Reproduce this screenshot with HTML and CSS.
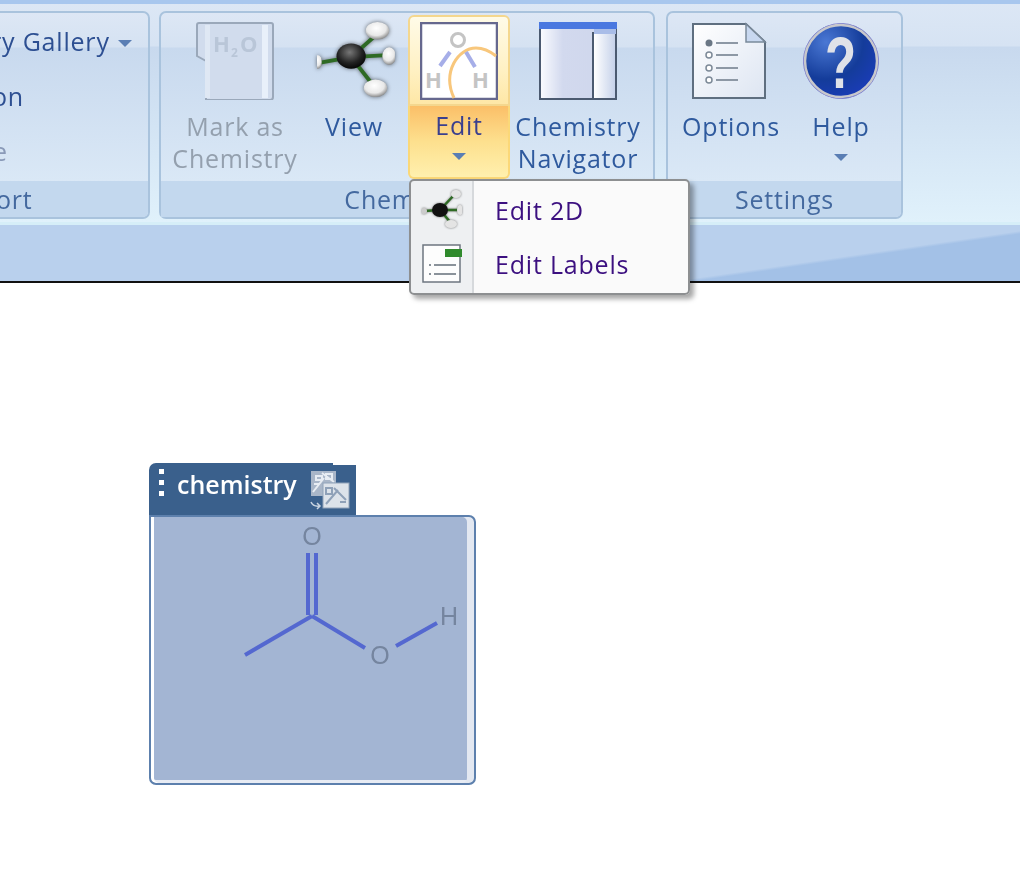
FILE: index.html
```html
<!DOCTYPE html>
<html lang="en">
<head>
  <meta charset="UTF-8" />
  <title>Chemistry ribbon</title>
  <link rel="stylesheet" href="styles.css">
</head>
<body>
  <div class="ribbon">
    <div class="groups">
      <div class="group first">
        <div class="group-body stack">
          <div class="stack-row gallery">ry Gallery <span class="arrow"></span></div>
          <div class="stack-row on">on</div>
          <div class="stack-row cut">e</div>
        </div>
        <div class="group-label cut-label">ort</div>
      </div>

      <div class="group chem">
        <div class="group-body">
          <div class="big-btn mark disabled">
            <div class="btn-top">
              <svg class="icon" viewBox="0 0 78 78">
                <path d="M3 1 H75 Q77 1 77 3 V75 Q77 78 74 78 H10 V39 L1 34 V3 Q1 1 3 1 Z" fill="#d1dced" stroke="#9aa8ba" stroke-width="2"/>
                <rect x="66" y="3" width="6" height="73" fill="#e8f0fa"/>
                <rect x="9" y="3" width="5" height="73" fill="#dfe8f4"/>
                <text x="17" y="30" class="h2o">H</text>
                <text x="35" y="35" class="h2o small">2</text>
                <text x="44" y="30" class="h2o">O</text>
              </svg>
            </div>
            <div class="btn-bottom">Mark as<br>Chemistry</div>
          </div>

          <div class="big-btn view">
            <div class="btn-top">
              <svg class="icon soft" viewBox="0 0 80 80">
                <defs>
                  <radialGradient id="ball" cx="45%" cy="35%" r="70%">
                    <stop offset="0" stop-color="#777"/>
                    <stop offset="0.6" stop-color="#222"/>
                    <stop offset="1" stop-color="#000"/>
                  </radialGradient>
                  <radialGradient id="white-ball" cx="45%" cy="35%" r="70%">
                    <stop offset="0" stop-color="#fff"/>
                    <stop offset="0.6" stop-color="#e8e8e8"/>
                    <stop offset="1" stop-color="#777"/>
                  </radialGradient>
                </defs>
                <g stroke="#2e6a24" stroke-width="4">
                  <line x1="35" y1="36" x2="62" y2="12"/>
                  <line x1="35" y1="36" x2="72" y2="34"/>
                  <line x1="35" y1="36" x2="60" y2="68"/>
                  <line x1="35" y1="36" x2="2" y2="42"/>
                </g>
                <ellipse cx="62" cy="9" rx="12" ry="9" fill="url(#white-ball)"/>
                <ellipse cx="74" cy="35" rx="7" ry="9" fill="url(#white-ball)"/>
                <ellipse cx="60" cy="68" rx="12" ry="9" fill="url(#white-ball)"/>
                <ellipse cx="1" cy="41" rx="4" ry="7" fill="url(#white-ball)"/>
                <ellipse cx="35" cy="35" rx="15" ry="13" fill="url(#ball)"/>
              </svg>
            </div>
            <div class="btn-bottom">View</div>
          </div>

          <div class="big-btn edit active">
            <div class="btn-top">
              <svg class="icon" viewBox="0 0 78 78">
                <rect x="1" y="1" width="76" height="76" fill="#fff" stroke="#66688e" stroke-width="2.5"/>
                <path d="M34 76 C22 50 38 26 56 26 Q66 26 76 34" fill="none" stroke="#f8c77c" stroke-width="3"/>
                <circle cx="38" cy="18" r="6.5" fill="none" stroke="#c4c4c4" stroke-width="3"/>
                <line x1="30" y1="30" x2="20" y2="44" stroke="#a6aee8" stroke-width="4"/>
                <line x1="46" y1="30" x2="55" y2="45" stroke="#a6aee8" stroke-width="4"/>
                <text x="5" y="66" class="edit-h">H</text>
                <text x="52" y="66" class="edit-h">H</text>
              </svg>
            </div>
            <div class="btn-bottom">Edit<span class="arrow low"></span></div>
          </div>

          <div class="big-btn nav">
            <div class="btn-top">
              <svg class="icon" viewBox="0 0 78 78">
                <defs>
                  <linearGradient id="pane" x1="0" x2="1" y1="0" y2="0">
                    <stop offset="0" stop-color="#fbfcff"/>
                    <stop offset="0.3" stop-color="#d2d9ee"/>
                    <stop offset="1" stop-color="#ced6ec"/>
                  </linearGradient>
                  <linearGradient id="side" x1="0" x2="1" y1="0" y2="0">
                    <stop offset="0" stop-color="#fff"/>
                    <stop offset="1" stop-color="#c6d2ea"/>
                  </linearGradient>
                </defs>
                <rect x="1" y="1" width="76" height="76" fill="url(#pane)" stroke="#4b5a70" stroke-width="2"/>
                <rect x="55" y="8" width="21" height="68" fill="url(#side)"/>
                <line x1="54" y1="10" x2="54" y2="77" stroke="#4b5a70" stroke-width="2"/>
                <rect x="0" y="0" width="78" height="7" fill="#4a78e0"/>
                <rect x="55" y="7" width="22" height="5" fill="#a9bde8"/>
              </svg>
            </div>
            <div class="btn-bottom">Chemistry<br>Navigator</div>
          </div>
        </div>
        <div class="group-label">Chemistry</div>
      </div>

      <div class="group settings">
        <div class="group-body">
          <div class="big-btn options">
            <div class="btn-top">
              <svg class="icon" viewBox="2 0 76 78">
                <defs>
                  <linearGradient id="paper" x1="0" x2="1" y1="0" y2="1">
                    <stop offset="0" stop-color="#fff"/>
                    <stop offset="1" stop-color="#dde5f2"/>
                  </linearGradient>
                </defs>
                <path d="M2 2 H55 L74 20 V76 H2 Z" fill="url(#paper)" stroke="#5f6f80" stroke-width="2"/>
                <path d="M55 2 V20 H74 Z" fill="#c8d8f0" stroke="#7a8a9a" stroke-width="1.5"/>
                <g stroke="#8d98a5" stroke-width="2">
                  <line x1="25" y1="21" x2="47" y2="21"/>
                  <line x1="25" y1="33" x2="47" y2="33"/>
                  <line x1="25" y1="46" x2="47" y2="46"/>
                  <line x1="25" y1="58" x2="47" y2="58"/>
                </g>
                <circle cx="18" cy="21" r="3.5" fill="#6a7785"/>
                <g fill="#fff" stroke="#7d8a98" stroke-width="1.5">
                  <circle cx="18" cy="33" r="3"/>
                  <circle cx="18" cy="46" r="3"/>
                  <circle cx="18" cy="58" r="3"/>
                </g>
              </svg>
            </div>
            <div class="btn-bottom">Options</div>
          </div>

          <div class="big-btn help">
            <div class="btn-top">
              <svg class="icon" viewBox="0 0 78 78">
                <defs>
                  <radialGradient id="globe" cx="30%" cy="25%" r="90%">
                    <stop offset="0" stop-color="#4a78d4"/>
                    <stop offset="0.55" stop-color="#143c9a"/>
                    <stop offset="1" stop-color="#1c3cc0"/>
                  </radialGradient>
                </defs>
                <circle cx="39" cy="39" r="37.5" fill="url(#globe)" stroke="#8080d0" stroke-width="1"/>
                <circle cx="39" cy="39" r="36" fill="none" stroke="#c8c8cc" stroke-width="2.5"/>
                <text class="qmark" transform="translate(39 66) scale(0.85 1.2)">?</text>
              </svg>
            </div>
            <div class="btn-bottom">Help<span class="arrow low"></span></div>
          </div>
        </div>
        <div class="group-label">Settings</div>
      </div>
    </div>

    <div class="ribbon-foot"></div>

    <div class="menu">
      <div class="menu-item">
        <div class="menu-icon">
          <svg class="soft-small" viewBox="0 0 40 40" width="40" height="40">
            <g stroke="#2e6a24" stroke-width="2.5">
              <line x1="18" y1="20" x2="33" y2="4"/>
              <line x1="18" y1="20" x2="38" y2="20"/>
              <line x1="18" y1="20" x2="29" y2="33"/>
              <line x1="18" y1="20" x2="2" y2="21"/>
            </g>
            <ellipse cx="34" cy="4" rx="5" ry="4" fill="#e4e4e4"/>
            <ellipse cx="38" cy="20" rx="3" ry="5" fill="#e4e4e4"/>
            <ellipse cx="29" cy="34" rx="6" ry="4" fill="#e4e4e4"/>
            <ellipse cx="2" cy="21" rx="3" ry="3" fill="#ccc"/>
            <ellipse cx="18" cy="20" rx="8" ry="7" fill="#111"/>
          </svg>
        </div>
        <div class="menu-text">Edit 2D</div>
      </div>
      <div class="menu-item">
        <div class="menu-icon">
          <svg viewBox="0 0 40 40" width="40" height="40">
            <path d="M1 1 H38 V38 H1 Z" fill="#fdfdfd" stroke="#6d7680" stroke-width="1.5"/>
            <rect x="23" y="5" width="17" height="8" fill="#2f8a2c"/>
            <g stroke="#8a929a" stroke-width="2">
              <line x1="12" y1="21" x2="34" y2="21"/>
              <line x1="12" y1="30" x2="34" y2="30"/>
              <line x1="7" y1="21" x2="9" y2="21"/>
              <line x1="7" y1="30" x2="9" y2="30"/>
            </g>
          </svg>
        </div>
        <div class="menu-text">Edit Labels</div>
      </div>
    </div>
  </div>

  <div class="block">
    <div class="block-tab">
      <div class="grip"><span></span><span></span><span></span></div>
      <div class="block-name">chemistry</div>
      <svg class="block-icon" viewBox="0 0 40 40" width="40" height="40">
        <rect x="1" y="1" width="25" height="25" fill="#a9b6c8"/>
        <path d="M3 22 L14 8 M12 3 L24 12 M6 6 H12 V10 H6 Z M16 4 H22 V9 H16 Z M4 14 H9" stroke="#e8edf3" stroke-width="2" fill="none"/>
        <rect x="13" y="13" width="26" height="25" fill="#dde3ea" stroke="#91a3b9"/>
        <path d="M16 34 L28 20 M24 18 L36 30 M30 32 H36 M16 18 H22 V24 H16 Z" stroke="#8fa1b8" stroke-width="2" fill="none"/>
        <path d="M1 32 Q3 37 10 36 M7 33 L10 36 L7 39" stroke="#c8d3e0" stroke-width="1.5" fill="none"/>
      </svg>
    </div>
    <div class="block-body">
      <svg class="molecule" viewBox="0 0 323 266" width="323" height="266">
        <g class="bonds">
          <line x1="157" y1="36" x2="157" y2="98"/>
          <line x1="165" y1="36" x2="165" y2="98"/>
          <line x1="94" y1="138" x2="161" y2="99"/>
          <line x1="161" y1="99" x2="214" y2="131"/>
          <line x1="245" y1="129" x2="286" y2="106"/>
        </g>
        <text x="161" y="28" class="atom">O</text>
        <text x="229" y="147" class="atom">O</text>
        <text x="298" y="108" class="atom">H</text>
      </svg>
    </div>
  </div>
</body>
</html>
```

FILE: styles.css
```css
body {
  margin: 0;
  background: #fff;
  font-family: 'Open Sans', 'Noto Sans', sans-serif;
  overflow: hidden;
}

.ribbon {
  position: relative;
  height: 277px;
  border-top: 4px solid #a8c7ee;
  border-bottom: 2px solid #111;
  background: linear-gradient(to bottom, #dce7f5 0, #d6e3f3 42px, #c8d9ee 43px, #e0f1fb 218px);
  color: #2f5a9e;
  font-size: 25px;
  line-height: 32px;
  letter-spacing: 0.8px;
  filter: blur(0.5px);
}

.groups {
  display: flex;
  height: 221px;
  padding-top: 7px;
  box-sizing: border-box;
  border-bottom: 3px solid #d6eef8;
}

.group {
  height: 208px;
  box-sizing: border-box;
  border: 2px solid #a9c3dd;
  border-radius: 7px;
  overflow: hidden;
  background: linear-gradient(to bottom, #dde7f5 0, #d5e2f2 34px, #c8d9ee 35px, #dae8f6 168px);
}

.group.first {
  width: 160px;
  margin-left: -10px;
  margin-right: 9px;
}

.group.chem {
  width: 496px;
  margin-right: 11px;
  overflow: visible;
}

.group.settings { width: 237px; }

.group-body {
  display: flex;
  height: 168px;
  padding-top: 2px;
  box-sizing: border-box;
}

.group-label {
  height: 36px;
  line-height: 37px;
  text-align: center;
  background: #c3d8ee;
  color: #44699f;
}

/* left group is cut by the window edge */
.cut-label {
  text-align: left;
  padding-left: 4px;
}

.stack {
  flex-direction: column;
  padding-top: 12px;
}

.stack-row {
  flex: none;
  height: 55px;
  line-height: 32px;
  padding-left: 10px;
  color: #2d4f92;
  white-space: nowrap;
}

.stack-row.gallery { margin-left: -11px; }
.stack-row.on { margin-left: -10px; }
.stack-row.cut { margin-left: -9px; color: #8a9ab8; }

.arrow {
  display: inline-block;
  width: 0;
  height: 0;
  margin-left: 1px;
  vertical-align: 4px;
  border-left: 7px solid transparent;
  border-right: 7px solid transparent;
  border-top: 7px solid #5a7eb4;
}

.arrow.low {
  display: block;
  margin: 12px auto 0;
}

.big-btn {
  display: flex;
  flex-direction: column;
  align-items: stretch;
  flex: none;
  height: 164px;
  box-sizing: border-box;
  text-align: center;
}

.btn-top {
  display: flex;
  justify-content: center;
  height: 91px;
  padding-top: 7px;
  box-sizing: border-box;
}

.btn-bottom {
  height: 73px;
  padding-top: 4px;
  box-sizing: border-box;
  white-space: nowrap;
}

.icon {
  width: 78px;
  height: 78px;
}

.soft { filter: drop-shadow(0 0 2px rgba(0, 0, 0, 0.55)); }
.soft-small { filter: drop-shadow(0 0 1px rgba(0, 0, 0, 0.5)); }

.big-btn.mark { width: 144px; margin-left: 2px; }
.big-btn.view { width: 94px; }
.big-btn.view .btn-top { padding-left: 3px; }
.big-btn.edit { width: 102px; margin-left: 7px; }
.big-btn.nav { width: 136px; }
.big-btn.options { width: 120px; margin-left: 3px; }
.big-btn.help { width: 100px; }

.disabled { color: #94a0ae; }

.active .btn-top {
  padding-top: 5px;
  border: 2px solid #f4d78e;
  border-radius: 6px 6px 0 0;
  background: linear-gradient(to bottom, #fffbe8, #fff1c4 60%, #fee7a6);
}

.active .btn-bottom {
  padding-top: 3px;
  border: 2px solid #fbd878;
  border-top: none;
  border-radius: 0 0 6px 6px;
  background: linear-gradient(to bottom, #fbbf68, #fde08e 50%, #fff0ae);
  color: #3a3f8e;
}

.h2o {
  font-size: 22px;
  font-weight: bold;
  fill: #b9c6d8;
  font-family: 'Open Sans', sans-serif;
}

.h2o.small { font-size: 12px; }

.edit-h {
  font-size: 22px;
  font-weight: bold;
  fill: #c4c4c4;
  font-family: 'Open Sans', sans-serif;
}

.qmark {
  font-size: 60px;
  font-weight: bold;
  fill: #dfe2e8;
  text-anchor: middle;
  font-family: 'Liberation Sans', sans-serif;
}

.ribbon-foot {
  height: 56px;
  background: linear-gradient(171.7deg, #b9d0ed 153px, #a3c1e7 156px);
}

.menu {
  position: absolute;
  left: 409px;
  top: 175px;
  width: 281px;
  height: 116px;
  box-sizing: border-box;
  padding: 2px 0;
  border: 2px solid #8d8f91;
  border-radius: 5px;
  background: linear-gradient(to right, #eef0f2 61px, #d6d9dc 61px, #d6d9dc 63px, #fafafa 63px);
  box-shadow: 4px 4px 5px rgba(0, 0, 0, 0.35);
  color: #3c1080;
}

.menu-item {
  display: flex;
  align-items: center;
  height: 54px;
}

.menu-icon {
  display: flex;
  flex: none;
  justify-content: center;
  width: 61px;
}

.menu-text { margin-left: 23px; }

.block {
  width: 327px;
  margin: 180px 0 0 149px;
  filter: blur(0.4px);
}

.block-tab {
  position: relative;
  display: flex;
  align-items: center;
  width: 207px;
  height: 52px;
  box-sizing: border-box;
  padding-left: 10px;
  background: #3a608c;
  border-radius: 7px 0 0 0;
  color: #fff;
  font-size: 25px;
}

/* small step in the top edge of the tab */
.block-tab::after {
  content: "";
  position: absolute;
  top: 0;
  right: 0;
  width: 23px;
  height: 2px;
  background: #fff;
}

.grip {
  display: flex;
  flex-direction: column;
  gap: 6px;
  margin-bottom: 14px;
}

.grip span {
  display: block;
  width: 5px;
  height: 5px;
  background: #fff;
}

.block-name {
  margin-left: 13px;
  margin-bottom: 10px;
  font-weight: 600;
}

.block-icon {
  margin-left: 13px;
  margin-top: 2px;
}

.block-body {
  height: 270px;
  box-sizing: border-box;
  border: 2px solid #5d80ad;
  border-radius: 0 7px 7px 7px;
  background: #a3b5d3;
  box-shadow: inset 3px 0 0 #fff, inset -7px 0 0 #e3e8f1, inset 0 -3px 0 #e8ecf4;
}

.molecule { display: block; }

.bonds line {
  stroke: #5468d0;
  stroke-width: 4;
}

.atom {
  font-size: 25px;
  fill: #75859f;
  text-anchor: middle;
  font-family: 'Liberation Sans', sans-serif;
}
```
